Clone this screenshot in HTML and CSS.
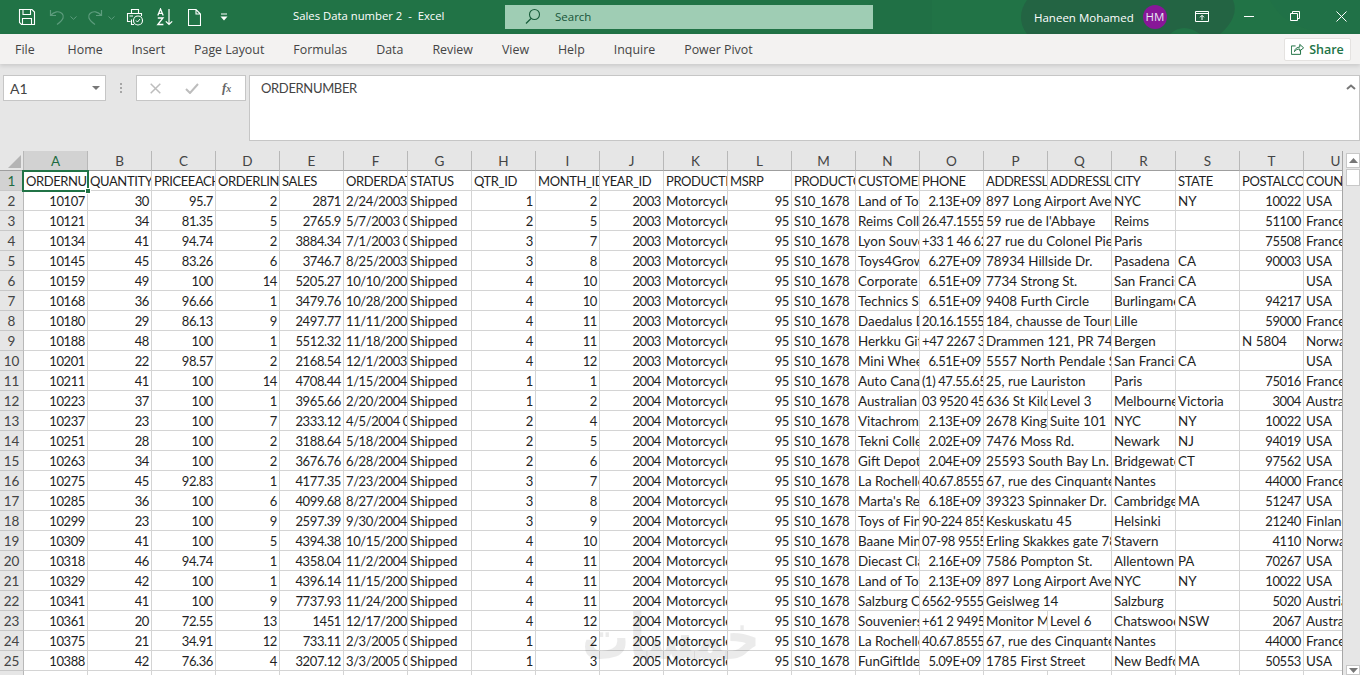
FILE: index.html
```html
<!DOCTYPE html>
<html lang="en">
<head>
<meta charset="utf-8">
<title>Sales Data number 2 - Excel</title>
<link rel="stylesheet" href="styles.css">
</head>
<body>
<div class="app">
<header class="titlebar">
  <svg class="pattern" width="500" height="34" viewBox="0 0 500 34" aria-hidden="true"><path d="M0 34C8 20 4 8 12 0H72V34Z" fill="#1f6d43" opacity=".5"/><path d="M167 0H373C378 12 372 24 360 34H340C330 26 318 26 310 34H167C158 22 160 10 167 0Z" fill="#236443"/><path d="M410 0H500V34H470C440 30 420 20 410 0Z" fill="#1f6f47" opacity=".5"/></svg>
  <div class="qat">
    <svg class="i i-save" width="18" height="18" viewBox="0 0 18 18"><path d="M1.5 1.5H14L16.500 4V16.500H3.500L1.500 14.500Z M5 1.500V6.500H12.500V1.500 M4.500 16.500V10.500H13.500V16.500" fill="none" stroke="#fff" stroke-width="1.100"/></svg>
    <svg class="i i-undo" width="16" height="18" viewBox="0 0 16 18"><path d="M1.500 2V7.500H7M1.500 7.500C5 3.500 10 2.500 13 5.500C15.500 8 15 11.500 8 16.500" fill="none" stroke="#5d9c7d" stroke-width="1.200"/></svg>
    <svg class="i i-chev" width="7" height="4" viewBox="0 0 7 4"><path d="M.5 .5L3.500 3.300L6.500 .5" fill="none" stroke="#5d9c7d"/></svg>
    <svg class="i i-redo" width="16" height="18" viewBox="0 0 16 18"><path d="M14.500 2V7.500H9M14.500 7.500C11 3.500 6 2.500 3 5.500C.5 8 1 11.500 8 16.500" fill="none" stroke="#5d9c7d" stroke-width="1.200"/></svg>
    <svg class="i i-chev2" width="7" height="4" viewBox="0 0 7 4"><path d="M.5 .5L3.500 3.300L6.500 .5" fill="none" stroke="#5d9c7d"/></svg>
    <svg class="i i-print" width="18" height="18" viewBox="0 0 18 18"><path d="M5.500 5V1.500H12.500V5M4.500 13.500H1.500V5.500H15.500V8M3.500 8H7M5.500 11.500V16.500H8" fill="none" stroke="#fff" stroke-width="1.100"/><circle cx="12" cy="12.500" r="4.500" fill="#217346" stroke="#fff" stroke-width="1.100"/><path d="M10 12.500L11.500 14L14 11" fill="none" stroke="#fff"/></svg>
    <svg class="i i-sort" width="17" height="18" viewBox="0 0 17 18"><path d="M1.800 7.500L4.500 1L7.200 7.500M2.800 5.300H6.200M1.800 10H7L1.800 16.500H7.400" fill="none" stroke="#fff" stroke-width="1.300"/><path d="M13 1V16.500M9.800 13.300L13 16.500L16.200 13.300" fill="none" stroke="#fff" stroke-width="1.200"/></svg>
    <svg class="i i-doc" width="13" height="17" viewBox="0 0 13 17"><path d="M.5 .5H8L12.500 5V16.500H.5ZM8 .5V5H12.500" fill="none" stroke="#fff" stroke-width="1.100"/></svg>
    <svg class="i i-cust" width="8" height="8" viewBox="0 0 8 8"><path d="M1 1H7" stroke="#fff" fill="none"/><path d="M.5 3.500H7.500L4 7.500Z" fill="#fff"/></svg>
  </div>
  <div class="doctitle">Sales Data number 2&nbsp; -&nbsp; Excel</div>
  <div class="search">
    <svg width="16" height="17" viewBox="0 0 16 17"><circle cx="9.500" cy="6.500" r="5" fill="none" stroke="#175c3a" stroke-width="1.100"/><path d="M6 10.500L1 15.500" stroke="#175c3a" stroke-width="1.200"/></svg>
    <span>Search</span>
  </div>
  <div class="user">Haneen Mohamed</div>
  <div class="avatar">HM</div>
  <svg class="win w-ribbon" width="14" height="11" viewBox="0 0 14 11"><path d="M.5 .5H13.500V10.500H.5ZM.5 2.500H13.500M7 9V4.500M5 6.300L7 4.300L9 6.300" fill="none" stroke="#fff"/></svg>
  <svg class="win w-min" width="10" height="1" viewBox="0 0 10 1"><path d="M0 .5H10" stroke="#fff"/></svg>
  <svg class="win w-max" width="10" height="10" viewBox="0 0 10 10"><path d="M2.500 2V.5H9.500V7.500H8M.5 2.500H7.500V9.500H.5Z" fill="none" stroke="#fff"/></svg>
  <svg class="win w-close" width="11" height="11" viewBox="0 0 11 11"><path d="M.5 .5L10.500 10.500M10.500 .5L.5 10.500" stroke="#fff"/></svg>
</header>

<nav class="tabs">
  <span class="tab tab-file">File</span>
  <span class="tab">Home</span>
  <span class="tab">Insert</span>
  <span class="tab">Page Layout</span>
  <span class="tab">Formulas</span>
  <span class="tab">Data</span>
  <span class="tab">Review</span>
  <span class="tab">View</span>
  <span class="tab">Help</span>
  <span class="tab">Inquire</span>
  <span class="tab">Power Pivot</span>
  <button class="share" type="button">
    <svg width="13" height="12" viewBox="0 0 17 15"><path d="M6 3.500H.5V14.500H12.500V9M4.500 11C5 7 8 5 11.500 5V1.500L16.500 6L11.500 10V7.500C8.500 7.500 6 8.500 4.500 11Z" fill="none" stroke="#217346" stroke-width="1.300"/></svg>
    <span>Share</span>
  </button>
</nav>

<section class="formula">
  <div class="namebox"><span>A1</span><i class="caret"></i></div>
  <div class="dots"><i></i><i></i><i></i></div>
  <div class="fbtns">
    <svg width="11" height="11" viewBox="0 0 11 11"><path d="M.7 .7L10.300 10.300M10.300 .7L.7 10.300" stroke="#bdbdbd" stroke-width="1.500"/></svg>
    <svg width="14" height="11" viewBox="0 0 14 11"><path d="M1 6L5 10L13 1" fill="none" stroke="#bdbdbd" stroke-width="2"/></svg>
    <span class="fx">f<sub>x</sub></span>
  </div>
  <div class="finput"><span>ORDERNUMBER</span><svg class="fup" width="10" height="6" viewBox="0 0 10 6"><path d="M1 5L5 1.500L9 5" fill="none" stroke="#777" stroke-width="2"/></svg></div>
</section>

<main class="sheet">
  <div class="gridwrap">
  <table class="grid">
    <thead>
      <tr><th class="corner"><i></i></th><th class="sel">A</th><th>B</th><th>C</th><th>D</th><th>E</th><th>F</th><th>G</th><th>H</th><th>I</th><th>J</th><th>K</th><th>L</th><th>M</th><th>N</th><th>O</th><th>P</th><th>Q</th><th>R</th><th>S</th><th>T</th><th>U</th></tr>
    </thead>
    <tbody>
      <tr class="hd"><th class="sel">1</th><td>ORDERNUMBER</td><td>QUANTITYORDERED</td><td>PRICEEACH</td><td>ORDERLINENUMBER</td><td>SALES</td><td>ORDERDATE</td><td>STATUS</td><td>QTR_ID</td><td>MONTH_ID</td><td>YEAR_ID</td><td>PRODUCTLINE</td><td>MSRP</td><td>PRODUCTCODE</td><td>CUSTOMERNAME</td><td>PHONE</td><td>ADDRESSLINE1</td><td>ADDRESSLINE2</td><td>CITY</td><td>STATE</td><td>POSTALCODE</td><td>COUNTRY</td></tr>
      <tr><th>2</th><td>10107</td><td>30</td><td>95.7</td><td>2</td><td>2871</td><td>2/24/2003 0:00</td><td>Shipped</td><td>1</td><td>2</td><td>2003</td><td>Motorcycles</td><td>95</td><td>S10_1678</td><td>Land of Toys Inc.</td><td class="n">2.13E+09</td><td colspan="2">897 Long Airport Avenue</td><td>NYC</td><td>NY</td><td class="n">10022</td><td>USA</td></tr>
      <tr><th>3</th><td>10121</td><td>34</td><td>81.35</td><td>5</td><td>2765.9</td><td>5/7/2003 0:00</td><td>Shipped</td><td>2</td><td>5</td><td>2003</td><td>Motorcycles</td><td>95</td><td>S10_1678</td><td>Reims Collectables</td><td>26.47.1555</td><td colspan="2">59 rue de l'Abbaye</td><td>Reims</td><td></td><td class="n">51100</td><td>France</td></tr>
      <tr><th>4</th><td>10134</td><td>41</td><td>94.74</td><td>2</td><td>3884.34</td><td>7/1/2003 0:00</td><td>Shipped</td><td>3</td><td>7</td><td>2003</td><td>Motorcycles</td><td>95</td><td>S10_1678</td><td>Lyon Souveniers</td><td>+33 1 46 62 7555</td><td colspan="2">27 rue du Colonel Pierre Avia</td><td>Paris</td><td></td><td class="n">75508</td><td>France</td></tr>
      <tr><th>5</th><td>10145</td><td>45</td><td>83.26</td><td>6</td><td>3746.7</td><td>8/25/2003 0:00</td><td>Shipped</td><td>3</td><td>8</td><td>2003</td><td>Motorcycles</td><td>95</td><td>S10_1678</td><td>Toys4GrownUps.com</td><td class="n">6.27E+09</td><td colspan="2">78934 Hillside Dr.</td><td>Pasadena</td><td>CA</td><td class="n">90003</td><td>USA</td></tr>
      <tr><th>6</th><td>10159</td><td>49</td><td>100</td><td>14</td><td>5205.27</td><td>10/10/2003 0:00</td><td>Shipped</td><td>4</td><td>10</td><td>2003</td><td>Motorcycles</td><td>95</td><td>S10_1678</td><td>Corporate Gift Ideas Co.</td><td class="n">6.51E+09</td><td colspan="2">7734 Strong St.</td><td>San Francisco</td><td>CA</td><td></td><td>USA</td></tr>
      <tr><th>7</th><td>10168</td><td>36</td><td>96.66</td><td>1</td><td>3479.76</td><td>10/28/2003 0:00</td><td>Shipped</td><td>4</td><td>10</td><td>2003</td><td>Motorcycles</td><td>95</td><td>S10_1678</td><td>Technics Stores Inc.</td><td class="n">6.51E+09</td><td colspan="2">9408 Furth Circle</td><td>Burlingame</td><td>CA</td><td class="n">94217</td><td>USA</td></tr>
      <tr><th>8</th><td>10180</td><td>29</td><td>86.13</td><td>9</td><td>2497.77</td><td>11/11/2003 0:00</td><td>Shipped</td><td>4</td><td>11</td><td>2003</td><td>Motorcycles</td><td>95</td><td>S10_1678</td><td>Daedalus Designs Imports</td><td>20.16.1555</td><td colspan="2">184, chausse de Tournai</td><td>Lille</td><td></td><td class="n">59000</td><td>France</td></tr>
      <tr><th>9</th><td>10188</td><td>48</td><td>100</td><td>1</td><td>5512.32</td><td>11/18/2003 0:00</td><td>Shipped</td><td>4</td><td>11</td><td>2003</td><td>Motorcycles</td><td>95</td><td>S10_1678</td><td>Herkku Gifts</td><td>+47 2267 3215</td><td colspan="2">Drammen 121, PR 744 Sentrum</td><td>Bergen</td><td></td><td>N 5804</td><td>Norway</td></tr>
      <tr><th>10</th><td>10201</td><td>22</td><td>98.57</td><td>2</td><td>2168.54</td><td>12/1/2003 0:00</td><td>Shipped</td><td>4</td><td>12</td><td>2003</td><td>Motorcycles</td><td>95</td><td>S10_1678</td><td>Mini Wheels Co.</td><td class="n">6.51E+09</td><td colspan="2">5557 North Pendale Street</td><td>San Francisco</td><td>CA</td><td></td><td>USA</td></tr>
      <tr><th>11</th><td>10211</td><td>41</td><td>100</td><td>14</td><td>4708.44</td><td>1/15/2004 0:00</td><td>Shipped</td><td>1</td><td>1</td><td>2004</td><td>Motorcycles</td><td>95</td><td>S10_1678</td><td>Auto Canal Petit</td><td>(1) 47.55.6555</td><td colspan="2">25, rue Lauriston</td><td>Paris</td><td></td><td class="n">75016</td><td>France</td></tr>
      <tr><th>12</th><td>10223</td><td>37</td><td>100</td><td>1</td><td>3965.66</td><td>2/20/2004 0:00</td><td>Shipped</td><td>1</td><td>2</td><td>2004</td><td>Motorcycles</td><td>95</td><td>S10_1678</td><td>Australian Collectors, Co.</td><td>03 9520 4555</td><td>636 St Kilda Road</td><td>Level 3</td><td>Melbourne</td><td>Victoria</td><td class="n">3004</td><td>Australia</td></tr>
      <tr><th>13</th><td>10237</td><td>23</td><td>100</td><td>7</td><td>2333.12</td><td>4/5/2004 0:00</td><td>Shipped</td><td>2</td><td>4</td><td>2004</td><td>Motorcycles</td><td>95</td><td>S10_1678</td><td>Vitachrome Inc.</td><td class="n">2.13E+09</td><td>2678 Kingston Rd.</td><td>Suite 101</td><td>NYC</td><td>NY</td><td class="n">10022</td><td>USA</td></tr>
      <tr><th>14</th><td>10251</td><td>28</td><td>100</td><td>2</td><td>3188.64</td><td>5/18/2004 0:00</td><td>Shipped</td><td>2</td><td>5</td><td>2004</td><td>Motorcycles</td><td>95</td><td>S10_1678</td><td>Tekni Collectables Inc.</td><td class="n">2.02E+09</td><td colspan="2">7476 Moss Rd.</td><td>Newark</td><td>NJ</td><td class="n">94019</td><td>USA</td></tr>
      <tr><th>15</th><td>10263</td><td>34</td><td>100</td><td>2</td><td>3676.76</td><td>6/28/2004 0:00</td><td>Shipped</td><td>2</td><td>6</td><td>2004</td><td>Motorcycles</td><td>95</td><td>S10_1678</td><td>Gift Depot Inc.</td><td class="n">2.04E+09</td><td colspan="2">25593 South Bay Ln.</td><td>Bridgewater</td><td>CT</td><td class="n">97562</td><td>USA</td></tr>
      <tr><th>16</th><td>10275</td><td>45</td><td>92.83</td><td>1</td><td>4177.35</td><td>7/23/2004 0:00</td><td>Shipped</td><td>3</td><td>7</td><td>2004</td><td>Motorcycles</td><td>95</td><td>S10_1678</td><td>La Rochelle Gifts</td><td>40.67.8555</td><td colspan="2">67, rue des Cinquante Otages</td><td>Nantes</td><td></td><td class="n">44000</td><td>France</td></tr>
      <tr><th>17</th><td>10285</td><td>36</td><td>100</td><td>6</td><td>4099.68</td><td>8/27/2004 0:00</td><td>Shipped</td><td>3</td><td>8</td><td>2004</td><td>Motorcycles</td><td>95</td><td>S10_1678</td><td>Marta's Replicas Co.</td><td class="n">6.18E+09</td><td colspan="2">39323 Spinnaker Dr.</td><td>Cambridge</td><td>MA</td><td class="n">51247</td><td>USA</td></tr>
      <tr><th>18</th><td>10299</td><td>23</td><td>100</td><td>9</td><td>2597.39</td><td>9/30/2004 0:00</td><td>Shipped</td><td>3</td><td>9</td><td>2004</td><td>Motorcycles</td><td>95</td><td>S10_1678</td><td>Toys of Finland, Co.</td><td>90-224 8555</td><td colspan="2">Keskuskatu 45</td><td>Helsinki</td><td></td><td class="n">21240</td><td>Finland</td></tr>
      <tr><th>19</th><td>10309</td><td>41</td><td>100</td><td>5</td><td>4394.38</td><td>10/15/2004 0:00</td><td>Shipped</td><td>4</td><td>10</td><td>2004</td><td>Motorcycles</td><td>95</td><td>S10_1678</td><td>Baane Mini Imports</td><td>07-98 9555</td><td colspan="2">Erling Skakkes gate 78</td><td>Stavern</td><td></td><td class="n">4110</td><td>Norway</td></tr>
      <tr><th>20</th><td>10318</td><td>46</td><td>94.74</td><td>1</td><td>4358.04</td><td>11/2/2004 0:00</td><td>Shipped</td><td>4</td><td>11</td><td>2004</td><td>Motorcycles</td><td>95</td><td>S10_1678</td><td>Diecast Classics Inc.</td><td class="n">2.16E+09</td><td colspan="2">7586 Pompton St.</td><td>Allentown</td><td>PA</td><td class="n">70267</td><td>USA</td></tr>
      <tr><th>21</th><td>10329</td><td>42</td><td>100</td><td>1</td><td>4396.14</td><td>11/15/2004 0:00</td><td>Shipped</td><td>4</td><td>11</td><td>2004</td><td>Motorcycles</td><td>95</td><td>S10_1678</td><td>Land of Toys Inc.</td><td class="n">2.13E+09</td><td colspan="2">897 Long Airport Avenue</td><td>NYC</td><td>NY</td><td class="n">10022</td><td>USA</td></tr>
      <tr><th>22</th><td>10341</td><td>41</td><td>100</td><td>9</td><td>7737.93</td><td>11/24/2004 0:00</td><td>Shipped</td><td>4</td><td>11</td><td>2004</td><td>Motorcycles</td><td>95</td><td>S10_1678</td><td>Salzburg Collectables</td><td>6562-9555</td><td colspan="2">Geislweg 14</td><td>Salzburg</td><td></td><td class="n">5020</td><td>Austria</td></tr>
      <tr><th>23</th><td>10361</td><td>20</td><td>72.55</td><td>13</td><td>1451</td><td>12/17/2004 0:00</td><td>Shipped</td><td>4</td><td>12</td><td>2004</td><td>Motorcycles</td><td>95</td><td>S10_1678</td><td>Souveniers And Things</td><td>+61 2 9495 8555</td><td>Monitor Money Building</td><td>Level 6</td><td>Chatswood</td><td>NSW</td><td class="n">2067</td><td>Australia</td></tr>
      <tr><th>24</th><td>10375</td><td>21</td><td>34.91</td><td>12</td><td>733.11</td><td>2/3/2005 0:00</td><td>Shipped</td><td>1</td><td>2</td><td>2005</td><td>Motorcycles</td><td>95</td><td>S10_1678</td><td>La Rochelle Gifts</td><td>40.67.8555</td><td colspan="2">67, rue des Cinquante Otages</td><td>Nantes</td><td></td><td class="n">44000</td><td>France</td></tr>
      <tr><th>25</th><td>10388</td><td>42</td><td>76.36</td><td>4</td><td>3207.12</td><td>3/3/2005 0:00</td><td>Shipped</td><td>1</td><td>3</td><td>2005</td><td>Motorcycles</td><td>95</td><td>S10_1678</td><td>FunGiftIdeas.com</td><td class="n">5.09E+09</td><td colspan="2">1785 First Street</td><td>New Bedford</td><td>MA</td><td class="n">50553</td><td>USA</td></tr>
      <tr><th>26</th><td></td><td></td><td></td><td></td><td></td><td></td><td></td><td></td><td></td><td></td><td></td><td></td><td></td><td></td><td></td><td></td><td></td><td></td><td></td><td></td><td></td></tr>
    </tbody>
  </table>
  <div class="cursor"><i></i></div>
  <div class="watermark" lang="ar" dir="rtl">خمسات</div>
  </div>
  <aside class="vscroll">
    <div class="sbtn"><svg width="9" height="5" viewBox="0 0 9 5"><path d="M0 5L4.500 0L9 5Z" fill="#777"/></svg></div>
    <div class="thumb"></div>
    <div class="track"></div>
    <div class="sbtn sbtn-down"><svg width="9" height="5" viewBox="0 0 9 5"><path d="M0 0L4.500 5L9 0Z" fill="#777"/></svg></div>
  </aside>
</main>
</div>
</body>
</html>
```
FILE: styles.css
```css
* { box-sizing: border-box; }
html, body { margin: 0; height: 100%; overflow: hidden; }
body { font-family: "Open Sans", "Noto Sans", sans-serif; background: #e6e6e6; }
.app { width: 1360px; height: 675px; display: flex; flex-direction: column; overflow: hidden; }

/* title bar */
.titlebar { position: relative; flex: 0 0 34px; display: flex; align-items: center; background: #217346; color: #fff; font-size: 12px; }
.pattern { position: absolute; right: 0; top: 0; }
.titlebar > *:not(.pattern) { position: relative; }
.qat { width: 293px; flex: none; display: flex; align-items: center; padding-left: 18px; height: 34px; }
.i { flex: none; display: block; }
.i-undo { margin-left: 13px; }
.i-chev { margin-left: 5px; margin-top: 1px; }
.i-redo { margin-left: 10px; }
.i-chev2 { margin-left: 5px; margin-top: 1px; }
.i-print { margin-left: 11px; }
.i-sort { margin-left: 12px; }
.i-doc { margin-left: 15px; }
.i-cust { margin-left: 19px; }
.doctitle { width: 212px; flex: none; font-size: 11.300px; margin-top: -3px; }
.search { width: 368px; height: 24px; flex: none; background: #9fcdb4; color: #17553a; display: flex; align-items: center; padding-left: 20px; gap: 14px; font-size: 11.500px; margin-top: -1px; }
.user { margin-left: 161px; width: 110px; flex: none; font-size: 11.500px; }
.avatar { width: 24px; height: 24px; flex: none; border-radius: 50%; background: #881798; color: #e8e8f4; font-size: 11.500px; text-align: center; line-height: 24px; margin-left: -1px; }
.win { flex: none; margin-top: -2px; }
.w-ribbon { margin-left: 28px; }
.w-min { margin-left: 35px; }
.w-max { margin-left: 36px; }
.w-close { margin-left: 36px; }

/* ribbon tabs */
.tabs { position: relative; z-index: 2; flex: 0 0 30px; display: flex; align-items: center; background: #f3f2f1; padding-left: 15px; gap: 29px; font-size: 12.400px; color: #444; box-shadow: 0 2px 4px rgba(0,0,0,.12); }
.tab { white-space: nowrap; }
.tab-file { margin-right: 4px; }
.share { margin-left: auto; margin-right: 9px; height: 23px; width: 67px; display: flex; align-items: center; justify-content: center; gap: 5px; background: #fff; border: 1px solid #e4e2e0; border-radius: 2px; color: #217346; font: 600 12.500px "Open Sans", sans-serif; padding: 0; }

/* formula bar */
.formula { flex: 0 0 87px; display: flex; align-items: flex-start; padding: 11px 0 0 3px; background: #e6e6e6; }
.namebox { width: 103px; height: 26px; background: #fff; border: 1px solid #c6c6c6; display: flex; align-items: center; justify-content: space-between; padding: 0 5px 0 6px; font: 14px Lato, sans-serif; color: #444; }
.caret { width: 0; height: 0; border-left: 4px solid transparent; border-right: 4px solid transparent; border-top: 4px solid #777; }
.dots { width: 30px; height: 26px; display: flex; flex-direction: column; align-items: center; justify-content: center; gap: 2px; }
.dots i { width: 2px; height: 2px; background: #a6a6a6; }
.fbtns { width: 110px; height: 26px; background: #fff; border: 1px solid #c6c6c6; display: flex; align-items: center; padding-left: 13px; gap: 24px; }
.fx { font: italic 700 13px "Liberation Serif", serif; color: #666; margin-left: -1px; }
.fx sub { font-size: 10px; vertical-align: baseline; }
.finput { position: relative; margin-left: 3px; width: 1111px; height: 66px; background: #fff; border: 1px solid #c6c6c6; padding: 4px 11px; font: 13px/17px Lato, sans-serif; letter-spacing: -.35px; color: #444; }
.fup { position: absolute; right: 3px; top: 8px; }

/* sheet */
.sheet { flex: 1; min-height: 0; display: flex; background: #e6e6e6; }
.gridwrap { position: relative; width: 1343px; flex: none; overflow: hidden; background: #fff; border-right: 1px solid #a6a6a6; }
.grid { border-collapse: separate; border-spacing: 0; table-layout: fixed; width: 1368px; font: 13.400px/17px Lato, sans-serif; color: #1f1f1f; }
.grid th, .grid td { height: 20px; padding: 2px 2px 0 2px; overflow: hidden; white-space: nowrap; border-right: 1px solid #d4d4d4; border-bottom: 1px solid #d4d4d4; }
.grid th { width: 64px; font-weight: 400; font-size: 13.500px; background: #e6e6e6; color: #444; text-align: center; border-color: #b8b8b8; }
.grid thead th { border-right-color: #b8b8b8; border-bottom-color: #9f9f9f; }
.grid tbody th { width: 24px; padding-left: 0; padding-right: 0; border-bottom-color: #c8c8c8; }
.grid .corner { width: 24px; position: relative; padding: 0; }
.corner i { position: absolute; right: 2px; bottom: 2px; width: 0; height: 0; border-left: 13px solid transparent; border-bottom: 13px solid #b4b4b4; }
.grid th.sel { background: #d2d2d2; color: #1e6b41; }

/* numeric columns */
.grid tbody tr:not(.hd) td:nth-child(-n+6),
.grid tbody tr:not(.hd) td:nth-child(n+9):nth-child(-n+11),
.grid tbody tr:not(.hd) td:nth-child(13),
.grid tbody tr:not(.hd) td.n { text-align: right; font-size: 13px; letter-spacing: -.4px; }
/* digit-heavy text columns: date, product code, phone */
.grid tbody tr:not(.hd) td:nth-child(7),
.grid tbody tr:not(.hd) td:nth-child(14),
.grid tbody tr:not(.hd) td:nth-child(16) { font-size: 13px; letter-spacing: -.4px; }
.grid tbody tr.hd td { font-size: 13px; letter-spacing: -.4px; }

.cursor { position: absolute; left: 22px; top: 19px; width: 67px; height: 22px; border: 2px solid #217346; pointer-events: none; }
.cursor i { position: absolute; right: -4px; bottom: -4px; width: 6px; height: 6px; background: #217346; border: 1px solid #fff; }
.watermark { position: absolute; left: 600px; top: 456px; width: 160px; text-align: center; font: 700 47px/60px "DejaVu Sans", sans-serif; color: rgba(0,0,0,.08); transform: scaleY(1.35); pointer-events: none; }

/* scrollbar */
.vscroll { flex: 1; display: flex; flex-direction: column; padding: 2px 0 0 3px; }
.sbtn { height: 15px; flex: none; background: #fff; border: 1px solid #c8c8c8; display: flex; align-items: center; justify-content: center; }
.thumb { height: 17px; flex: none; margin-top: 1px; background: #fff; border: 1px solid #c8c8c8; }
.track { flex: 1; }
.sbtn-down { height: 10px; align-items: flex-end; padding-bottom: 1px; }
```
